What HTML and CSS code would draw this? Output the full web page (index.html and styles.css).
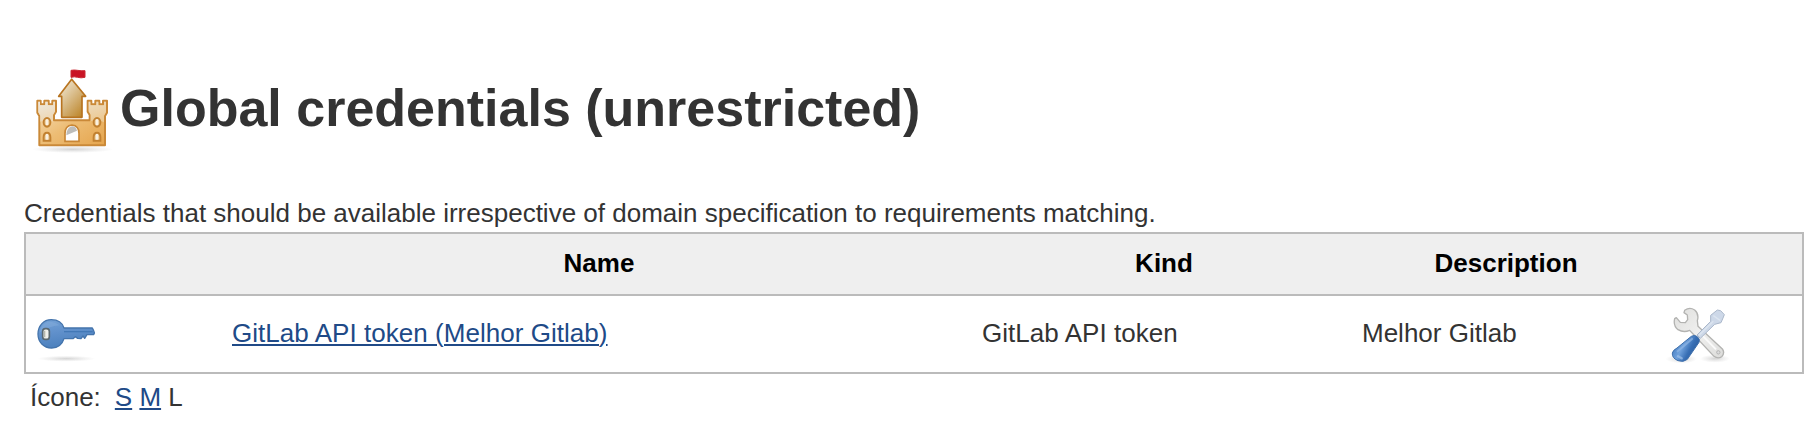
FILE: index.html
```html
<!DOCTYPE html>
<html lang="pt">
<head>
<meta charset="utf-8">
<title>Global credentials (unrestricted)</title>
<link rel="stylesheet" href="styles.css">
</head>
<body>
<main class="page">
  <h1 class="heading">
    <svg class="heading-icon" viewBox="0 0 300 300" aria-hidden="true">
      <defs>
        <linearGradient id="wall" x1="0" y1="0" x2="1" y2="1"><stop offset="0" stop-color="#f6e2c2"/><stop offset=".5" stop-color="#edbd75"/><stop offset="1" stop-color="#e5a44c"/></linearGradient>
        <linearGradient id="tower" x1="0" y1="0" x2=".8" y2="1"><stop offset="0" stop-color="#f7f0e2"/><stop offset=".45" stop-color="#dcc294"/><stop offset="1" stop-color="#bd862b"/></linearGradient>
        <linearGradient id="turret" x1="0" y1="0" x2="1" y2="1"><stop offset="0" stop-color="#eee9df"/><stop offset="1" stop-color="#ecc68b"/></linearGradient>
        <radialGradient id="shade"><stop offset="0" stop-color="#777" stop-opacity=".32"/><stop offset="1" stop-color="#999" stop-opacity="0"/></radialGradient>
      </defs>
      <ellipse cx="158" cy="268" rx="122" ry="11" fill="url(#shade)"/>
      <path d="M155 56V31" stroke="#bbb" stroke-width="3"/>
      <path d="M153 31q10-2 20 0t22 1v20q-12 3-22 0t-20 0z" fill="#c91425" stroke="#c92b35" stroke-width="3"/>
      <path d="M155 58L116 109H125V172H186V109H197Z" fill="url(#tower)" stroke="#b87420" stroke-width="5" stroke-linejoin="round"/>
      <path d="M52 122H62V133H73V122H86V133H97V122H108V155L102 165V181H209V165L203 155V122H214V133H226V122H238V133H249V122H261V158L255 168V256H58V168L52 158Z" fill="url(#wall)" stroke="#ca8938" stroke-width="6" stroke-linejoin="round"/>
      <path d="M55 125H60V136H76V125H83V136H100V125H105V154L99 164V185Q80 174 61 185V167L55 156ZM206 125H211V136H229V125H235V136H252V125H258V156L252 167V187Q230 174 212 184V164L206 154Z" fill="url(#turret)"/>
      <g fill="#eed3a6" stroke="#c28130" stroke-width="6">
        <ellipse cx="81" cy="187" rx="10" ry="13"/><ellipse cx="231" cy="187" rx="10" ry="13"/>
        <path d="M71 242v-10q0-14 10-14t10 14v10zM221 242v-10q0-14 10-14t10 14v10z"/>
      </g>
      <path d="M81 178v17M231 178v17M81 222v17M231 222v17" stroke="#fff" stroke-width="4"/>
      <path d="M135 244v-24q0-23 21-25 21 2 21 25v24z" fill="#fff" stroke="#c98736" stroke-width="5"/>
      <path d="M139 226q1-24 17-27 12 0 15 13z" fill="#bdbdbb"/>
    </svg>
    <span class="heading-text">Global credentials (unrestricted)</span>
  </h1>
  <p class="intro">Credentials that should be available irrespective of domain specification to requirements matching.</p>
  <table class="credentials">
    <colgroup><col class="col-icon"><col class="col-name"><col class="col-kind"><col class="col-desc"><col class="col-tools"></colgroup>
    <thead><tr><th></th><th>Name</th><th class="kind">Kind</th><th>Description</th><th></th></tr></thead>
    <tbody><tr>
      <td>
        <svg class="key-icon" viewBox="9 6 216 192" aria-hidden="true">
          <defs><linearGradient id="key" x1="0" y1="0" x2=".3" y2="1"><stop offset="0" stop-color="#75a3d7"/><stop offset=".5" stop-color="#6090cb"/><stop offset="1" stop-color="#4b80bd"/></linearGradient></defs>
          <ellipse cx="124" cy="176" rx="87" ry="9" fill="url(#shade)"/>
          <path d="M79 59C55 59 39 78 39 102S56 144 80 144C99 144 112 132 117 116H144L151 110 158 115 168 116 174 108 179 115 186 104 206 104Q210 98 206 92L202 84H117C112 69 98 59 79 59Z" fill="url(#key)" stroke="#4474ac" stroke-width="4" stroke-linejoin="round"/>
          <path d="M117 95H203" stroke="#4278b6" stroke-width="4"/>
          <path d="M57 72q22-15 47 4-33 3-60 22 2-17 13-26Z" fill="#90b5df" opacity=".35"/>
          <rect x="53" y="86" width="20" height="32" rx="8" fill="#f0f0eb" stroke="#5a6870" stroke-width="5"/>
          <path d="M59 92v20" stroke="#b6b7ac" stroke-width="4"/>
        </svg>
      </td>
      <td><a class="name-link" href="#">GitLab API token (Melhor Gitlab)</a></td>
      <td class="kind">GitLab API token</td>
      <td class="description">Melhor Gitlab</td>
      <td>
        <svg class="tools-icon" viewBox="48 36 192 192" aria-hidden="true">
          <defs>
            <linearGradient id="handle" x1="0" y1=".2" x2="1" y2=".7"><stop offset="0" stop-color="#3871b7"/><stop offset=".4" stop-color="#6fa1dc"/><stop offset=".65" stop-color="#386fb5"/><stop offset="1" stop-color="#245594"/></linearGradient>
            <linearGradient id="steel" x1="0" y1="0" x2="1" y2="1"><stop offset="0" stop-color="#dededc"/><stop offset=".5" stop-color="#f0f0ef"/><stop offset="1" stop-color="#dcdcda"/></linearGradient>
          </defs>
          <ellipse cx="94" cy="207" rx="47" ry="13" fill="url(#shade)"/><ellipse cx="195" cy="206" rx="45" ry="12" fill="url(#shade)"/>
          <path d="M104 61Q119 50 134 60 148 72 142 92L144 109 218 178Q225 190 215 200 204 208 192 199L132 135 119 121Q101 129 84 119 69 107 74 86L79 83 91 97 106 98 113 89 112 75 102 68Z" fill="url(#steel)" stroke="#b3b3b1" stroke-width="4" stroke-linejoin="round"/>
          <path d="M148 127L198 178" stroke="#fafafa" stroke-width="6"/>
          <circle cx="205" cy="187" r="5" fill="#ddd" stroke="#b5b5b5" stroke-width="3"/>
          <path d="M182 76L202 60 212 62 223 74 219 84 213 98 194 103 151 145 141 135 182 94Z" fill="#cdd8e8" stroke="#aab7ca" stroke-width="3" stroke-linejoin="round"/>
          <path d="M190 77l20 14M147 136l43-42" stroke="#dce5f0" stroke-width="4"/>
          <path d="M124 139Q133 133 142 140 151 147 147 157L112 208Q101 218 84 212 65 204 67 189 69 180 81 174Z" fill="url(#handle)" stroke="#3d6eaa" stroke-width="3"/>
          <path d="M126 147L83 184" stroke="#8db4e3" stroke-width="6" stroke-linecap="round" opacity=".75"/>
          <path d="M84 199l11 6" stroke="#9fc1e9" stroke-width="7" stroke-linecap="round" opacity=".7"/>
        </svg>
      </td>
    </tr></tbody>
  </table>
  <div class="sizes"><span class="sizes-label">Ícone:</span><a href="#">S</a> <a href="#">M</a> <span>L</span></div>
</main>
</body>
</html>
```
FILE: styles.css
```css
body {
  margin: 0;
  background: #fff;
  color: #333;
  font: 26px/30px "Liberation Sans", Arial, sans-serif;
}

.page {
  padding: 60px 16px 0 24px;
}

.heading {
  display: flex;
  align-items: center;
  height: 100px;
  margin: 0 0 38px -4px;
  font-size: 52px;
  line-height: 60px;
}

.heading-icon {
  flex: none;
  width: 100px;
  height: 100px;
}

.heading-text {
  padding-bottom: 4px;
}

.heading-icon,
.key-icon,
.tools-icon {
  filter: blur(0.6px);
}

.intro {
  margin: 0;
  height: 34px;
}

.credentials {
  width: 1780px;
  table-layout: fixed;
  border-collapse: separate;
  border-spacing: 0;
  border: 2px solid #bbb;
}

.col-icon { width: 202px; }
.col-name { width: 750px; }
.col-kind { width: 378px; }
.col-desc { width: 308px; }

.credentials th {
  box-sizing: border-box;
  height: 62px;
  padding: 0 8px 2px 0;
  border-bottom: 2px solid #bbb;
  background: #efefef;
  color: #000;
}

.credentials th.kind {
  padding-right: 6px;
}

.credentials td {
  box-sizing: border-box;
  height: 76px;
  padding: 0 4px 2px;
  vertical-align: middle;
}

.credentials td:first-child,
.credentials td:last-child {
  padding: 0 2px;
}

.credentials td.description {
  padding-left: 6px;
}

.key-icon,
.tools-icon {
  display: block;
  width: 72px;
  height: 64px;
}

.tools-icon {
  width: 64px;
}

a {
  color: #204a87;
  text-decoration-thickness: 2px;
  text-underline-offset: 2px;
}

.name-link,
td.kind {
  letter-spacing: 0.04px;
}

.sizes {
  padding: 8px 0 0 6px;
}

.sizes-label {
  margin-right: 14px;
}
```
